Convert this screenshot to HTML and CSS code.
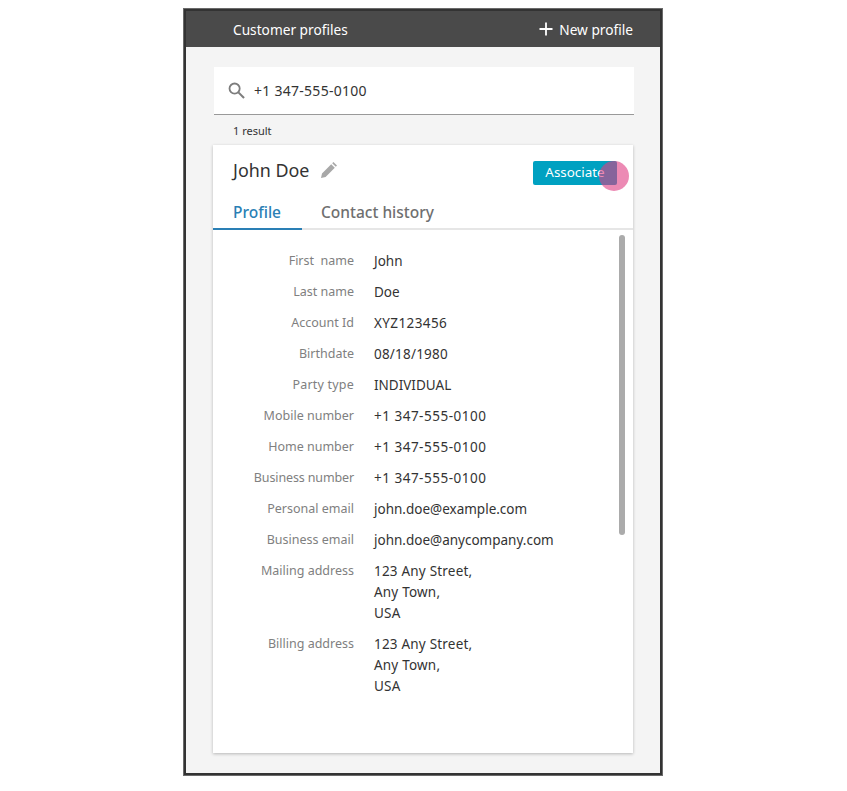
FILE: index.html
```html
<!DOCTYPE html>
<html lang="en">
<head>
<meta charset="utf-8">
<title>Customer profiles</title>
<link rel="stylesheet" href="styles.css">
</head>
<body>
<div class="frame">
  <header class="topbar">
    <span class="topbar-title">Customer profiles</span>
    <span class="new-profile">
      <svg class="plus" viewBox="0 0 14 14" width="14" height="14"><path d="M7 0.5v13M0.5 7h13" stroke="#fff" stroke-width="1.8" fill="none"/></svg>
      New profile
    </span>
  </header>
  <main class="content">
    <div class="search">
      <svg class="search-icon" viewBox="0 0 18 18" width="17" height="17"><circle cx="7" cy="7" r="5.4" fill="none" stroke="#7d7d7d" stroke-width="1.9"/><path d="M11 11l6 6" stroke="#7d7d7d" stroke-width="2.2" fill="none"/></svg>
      <span class="search-text">+1 347-555-0100</span>
    </div>
    <div class="result-count">1 result</div>
    <section class="card">
      <div class="card-head">
        <div class="name-wrap">
          <span class="name">John Doe</span>
          <svg class="pencil" viewBox="0 0 16 16" width="16" height="16"><path d="M0 16l1-4.6L10.2 2.2l3.6 3.6L4.6 15zM11.2 1.2L12.4 0 16 3.6l-1.2 1.2z" fill="#a8a8a8"/></svg>
        </div>
        <div class="associate-wrap">
          <span class="associate">Associate</span>
          <span class="touch-dot"></span>
        </div>
      </div>
      <nav class="tabs">
        <span class="tab tab-active">Profile</span>
        <span class="tab tab-next">Contact history</span>
      </nav>
      <div class="details">
        <div class="scrollbar"></div>
        <dl class="rows">
          <div class="row"><dt>First&nbsp; name</dt><dd>John</dd></div>
          <div class="row"><dt>Last name</dt><dd>Doe</dd></div>
          <div class="row"><dt>Account Id</dt><dd class="num-mid">XYZ123456</dd></div>
          <div class="row"><dt>Birthdate</dt><dd class="addr">08/18/1980</dd></div>
          <div class="row"><dt class="wide">Party type</dt><dd>INDIVIDUAL</dd></div>
          <div class="row"><dt>Mobile number</dt><dd class="num">+1 347-555-0100</dd></div>
          <div class="row"><dt>Home number</dt><dd class="num">+1 347-555-0100</dd></div>
          <div class="row"><dt class="tight">Business number</dt><dd class="num">+1 347-555-0100</dd></div>
          <div class="row"><dt>Personal email</dt><dd>john.doe@example.com</dd></div>
          <div class="row"><dt>Business email</dt><dd>john.doe@anycompany.com</dd></div>
          <div class="row"><dt>Mailing address</dt><dd class="addr">123 Any Street,<br>Any Town,<br>USA</dd></div>
          <div class="row"><dt>Billing address</dt><dd class="addr">123 Any Street,<br>Any Town,<br>USA</dd></div>
        </dl>
      </div>
    </section>
  </main>
</div>
</body>
</html>
```
FILE: styles.css
```css
* { box-sizing: border-box; }
html, body { margin: 0; padding: 0; background: #fff; }
body {
  width: 847px;
  height: 791px;
  padding: 8px 0 0 183px;
  font-family: "Noto Sans", "Open Sans", sans-serif;
  color: #333;
}
.frame {
  width: 480px;
  height: 768px;
  border: 3px solid #333;
  outline: 1px solid #6a6a6a;
  outline-offset: -1px;
  background: #f4f4f4;
  display: flex;
  flex-direction: column;
}
.topbar {
  height: 36px;
  flex: none;
  background: #4a4a4a;
  color: #fff;
  display: flex;
  align-items: center;
  justify-content: space-between;
  padding: 0 27px 0 47px;
  font-size: 13.7px;
}
.new-profile { display: flex; align-items: center; gap: 6px; }
.content { flex: 1; padding: 20px 27px 0 27px; }
.search {
  width: 420px;
  margin-left: 1px;
  height: 48px;
  background: #fff;
  border-bottom: 1px solid #999;
  display: flex;
  align-items: center;
  padding-left: 14px;
  gap: 9px;
}
.search-text { font-size: 14px; color: #333; letter-spacing: 0.27px; }
.result-count {
  height: 30px;
  padding: 7px 0 0 20px;
  font-size: 11px;
  line-height: 18px;
  color: #333;
}
.card {
  width: 420px;
  height: 608px;
  background: #fff;
  box-shadow: 0 1px 3px rgba(0, 0, 0, 0.25);
  display: flex;
  flex-direction: column;
}
.card-head {
  height: 50px;
  flex: none;
  display: flex;
  align-items: flex-start;
  justify-content: space-between;
  padding: 13px 16px 0 20px;
}
.name-wrap { display: flex; align-items: center; gap: 12px; }
.name { font-size: 17.9px; line-height: 24px; color: #333; }
.associate-wrap { position: relative; margin-top: 3px; }
.associate {
  display: block;
  width: 84px;
  height: 24px;
  border-radius: 2px;
  background: #00a1c1;
  color: #fff;
  font-size: 13.4px;
  line-height: 23px;
  text-align: center;
}
.touch-dot {
  position: absolute;
  left: 66px;
  top: 0;
  width: 30px;
  height: 30px;
  border-radius: 50%;
  background: rgba(224, 60, 130, 0.6);
}
.tabs {
  height: 35px;
  flex: none;
  display: flex;
  border-bottom: 2px solid #e6e6e6;
}
.tab {
  font-size: 15.5px;
  line-height: 34px;
  color: #6f6f6f;
  padding: 0 20px;
  height: 35px;
  font-weight: 500;
}
.tab-active { color: #2a7fb5; border-bottom: 2px solid #2a7fb5; padding-right: 21px; }
.tab-next { margin-left: -1px; }
.details { flex: 1; position: relative; }
.scrollbar {
  position: absolute;
  left: 406px;
  top: 5px;
  width: 6px;
  height: 300px;
  border-radius: 3px;
  background: #ababab;
}
.rows { margin: 0; padding-top: 20px; }
.row { display: flex; margin-bottom: 9px; gap: 20px; }
.row dt {
  width: 141px;
  text-align: right;
  font-size: 12.5px;
  line-height: 21px;
  color: #808080;
}
.row .wide { letter-spacing: 0.2px; }
.row .tight { letter-spacing: -0.13px; }
.row dd { margin: 0; padding-top: 1px; font-size: 13.5px; line-height: 21px; color: #333; }
.row .num { letter-spacing: 0.5px; }
.row .num-mid { letter-spacing: 0.4px; }
.row .addr { letter-spacing: 0.2px; }
```
